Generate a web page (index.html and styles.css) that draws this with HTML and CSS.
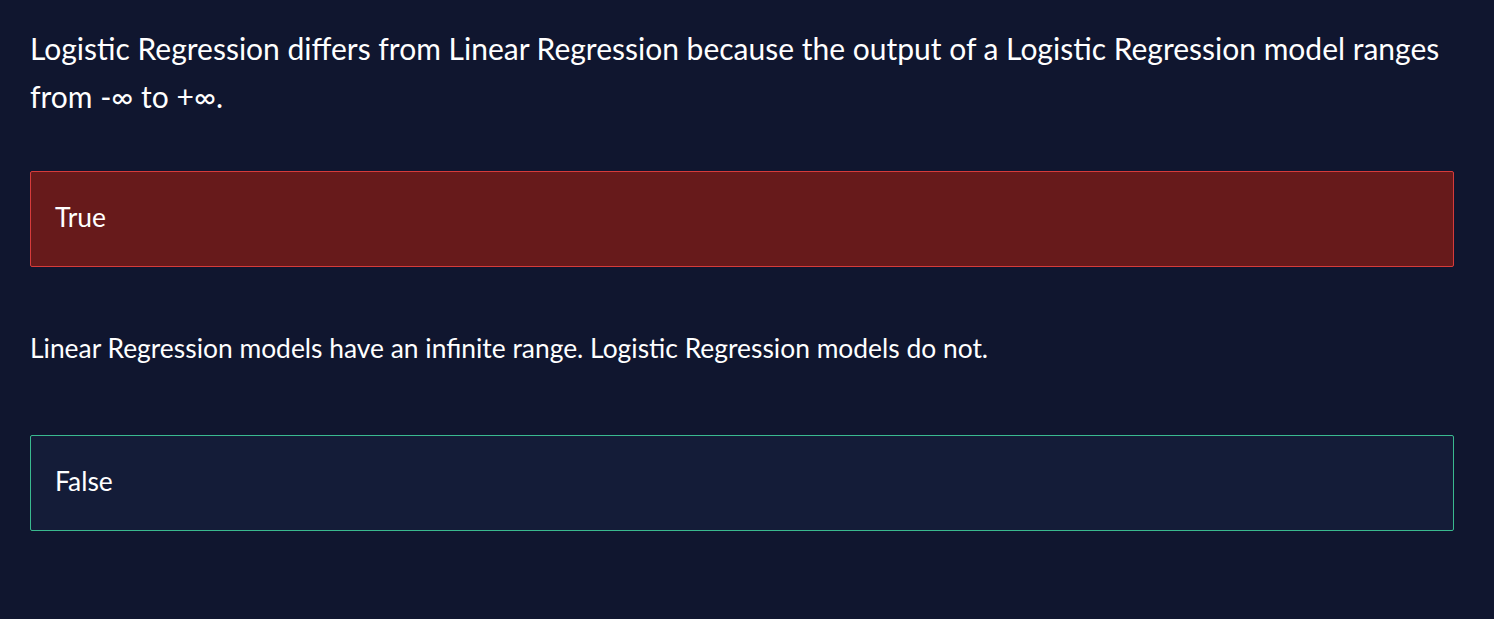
FILE: index.html
```html
<!DOCTYPE html>
<html>
<head>
<meta charset="utf-8">
<link rel="stylesheet" href="styles.css">
</head>
<body>
<main class="quiz">
  <p class="question">Logistic Regression differs from Linear Regression because the output of a Logistic Regression model ranges from -∞ to +∞.</p>
  <div class="option option-wrong">True</div>
  <p class="explanation">Linear Regression models have an infinite range. Logistic Regression models do not.</p>
  <div class="option option-right">False</div>
</main>
</body>
</html>
```
FILE: styles.css
```css
html, body {
  margin: 0;
  padding: 0;
  background: #10162f;
}
body {
  font-family: Lato, "Open Sans", sans-serif;
  color: #ffffff;
}
.quiz {
  display: flex;
  flex-direction: column;
  padding: 24px 40px 40px 30px;
}
.question {
  margin: 0;
  font-size: 30px;
  line-height: 48px;
}
.option {
  margin-top: 51px;
  height: 96px;
  box-sizing: border-box;
  display: flex;
  align-items: center;
  padding: 0 24px 5px 24px;
  font-size: 26.4px;
  border-radius: 2px;
  border: 1px solid;
}
.option-wrong {
  background: #671a1b;
  border-color: #d63b3b;
}
.option-right {
  background: #141c38;
  border-color: #3ab98f;
  margin-top: 69px;
}
.explanation {
  margin: 63px 0 0 0;
  font-size: 26.4px;
  line-height: 36px;
}
```
